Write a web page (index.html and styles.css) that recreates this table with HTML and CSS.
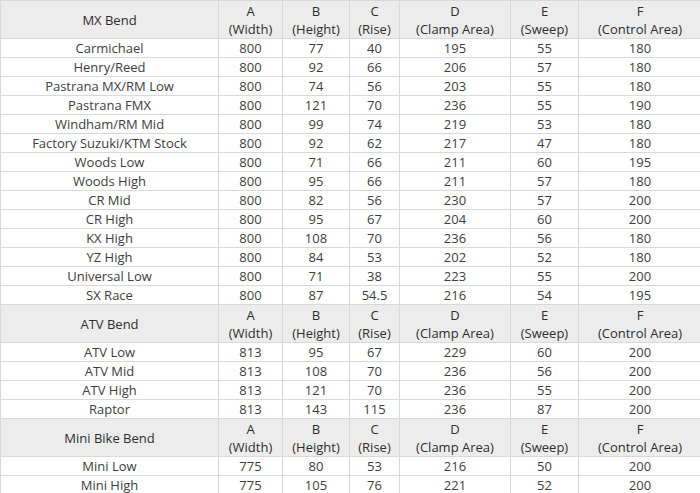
FILE: index.html
```html
<!DOCTYPE html>
<html>
<head>
<meta charset="utf-8">
<link rel="stylesheet" href="styles.css">
</head>
<body>
<table class="bends">
<colgroup>
<col class="c-name"><col class="c-a"><col class="c-b"><col class="c-c"><col class="c-d"><col class="c-e"><col class="c-f">
</colgroup>
<tbody>
<tr class="head"><td>MX Bend</td><td>A<br>(Width)</td><td>B<br>(Height)</td><td>C<br>(Rise)</td><td>D<br>(Clamp Area)</td><td>E<br>(Sweep)</td><td>F<br>(Control Area)</td></tr>
<tr><td>Carmichael</td><td>800</td><td>77</td><td>40</td><td>195</td><td>55</td><td>180</td></tr>
<tr><td>Henry/Reed</td><td>800</td><td>92</td><td>66</td><td>206</td><td>57</td><td>180</td></tr>
<tr><td>Pastrana MX/RM Low</td><td>800</td><td>74</td><td>56</td><td>203</td><td>55</td><td>180</td></tr>
<tr><td>Pastrana FMX</td><td>800</td><td>121</td><td>70</td><td>236</td><td>55</td><td>190</td></tr>
<tr><td>Windham/RM Mid</td><td>800</td><td>99</td><td>74</td><td>219</td><td>53</td><td>180</td></tr>
<tr><td>Factory Suzuki/KTM Stock</td><td>800</td><td>92</td><td>62</td><td>217</td><td>47</td><td>180</td></tr>
<tr><td>Woods Low</td><td>800</td><td>71</td><td>66</td><td>211</td><td>60</td><td>195</td></tr>
<tr><td>Woods High</td><td>800</td><td>95</td><td>66</td><td>211</td><td>57</td><td>180</td></tr>
<tr><td>CR Mid</td><td>800</td><td>82</td><td>56</td><td>230</td><td>57</td><td>200</td></tr>
<tr><td>CR High</td><td>800</td><td>95</td><td>67</td><td>204</td><td>60</td><td>200</td></tr>
<tr><td>KX High</td><td>800</td><td>108</td><td>70</td><td>236</td><td>56</td><td>180</td></tr>
<tr><td>YZ High</td><td>800</td><td>84</td><td>53</td><td>202</td><td>52</td><td>180</td></tr>
<tr><td>Universal Low</td><td>800</td><td>71</td><td>38</td><td>223</td><td>55</td><td>200</td></tr>
<tr><td>SX Race</td><td>800</td><td>87</td><td>54.5</td><td>216</td><td>54</td><td>195</td></tr>
<tr class="head"><td>ATV Bend</td><td>A<br>(Width)</td><td>B<br>(Height)</td><td>C<br>(Rise)</td><td>D<br>(Clamp Area)</td><td>E<br>(Sweep)</td><td>F<br>(Control Area)</td></tr>
<tr><td>ATV Low</td><td>813</td><td>95</td><td>67</td><td>229</td><td>60</td><td>200</td></tr>
<tr><td>ATV Mid</td><td>813</td><td>108</td><td>70</td><td>236</td><td>56</td><td>200</td></tr>
<tr><td>ATV High</td><td>813</td><td>121</td><td>70</td><td>236</td><td>55</td><td>200</td></tr>
<tr><td>Raptor</td><td>813</td><td>143</td><td>115</td><td>236</td><td>87</td><td>200</td></tr>
<tr class="head"><td>Mini Bike Bend</td><td>A<br>(Width)</td><td>B<br>(Height)</td><td>C<br>(Rise)</td><td>D<br>(Clamp Area)</td><td>E<br>(Sweep)</td><td>F<br>(Control Area)</td></tr>
<tr><td>Mini Low</td><td>775</td><td>80</td><td>53</td><td>216</td><td>50</td><td>200</td></tr>
<tr><td>Mini High</td><td>775</td><td>105</td><td>76</td><td>221</td><td>52</td><td>200</td></tr>
</tbody>
</table>
</body>
</html>
```
FILE: styles.css
```css
html, body {
  margin: 0;
  padding: 0;
  background: #ffffff;
}
.bends {
  width: 701px;
  border-collapse: collapse;
  table-layout: fixed;
  font-family: "Open Sans", "Liberation Sans", sans-serif;
  font-size: 13px;
  color: #3d3d3d;
}
.c-name { width: 218px; }
.c-a { width: 64px; }
.c-b { width: 67px; }
.c-c { width: 50px; }
.c-d { width: 111px; }
.c-e { width: 68px; }
.c-f { width: 123px; }
.bends td {
  border: 1px solid #d9d9d9;
  padding: 0;
  height: 18px;
  line-height: 18px;
  text-align: center;
  vertical-align: middle;
  white-space: nowrap;
}
.bends .head td {
  background: #ececec;
  color: #2e2e2e;
  height: 37px;
}
```
